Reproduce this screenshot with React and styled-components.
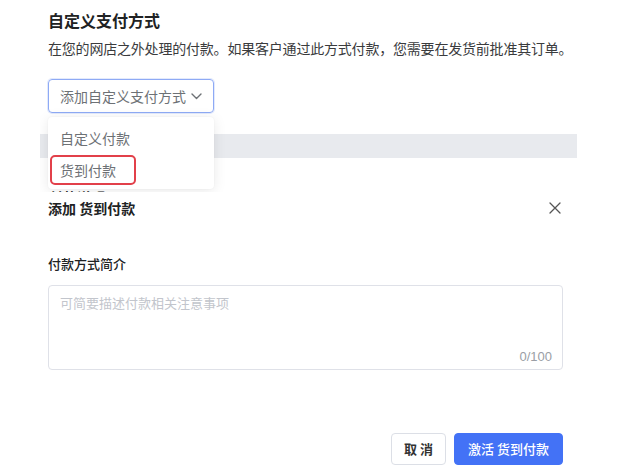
import React from "react";
import styled, { createGlobalStyle } from "styled-components";

const Global = createGlobalStyle`
  html, body { margin: 0; padding: 0; background: #ffffff; }
  body { font-family: "Noto Sans CJK SC", "Noto Sans", "Liberation Sans", sans-serif; color: #202223; }
  * { box-sizing: border-box; }
`;

const Page = styled.div`
  width: 641px;
  height: 472px;
  overflow: hidden;
  background: #fff;
`;

const TopPanel = styled.div`
  position: relative;
  margin-left: 40px;
  width: 537px;
  height: 192px;
  overflow: hidden;
`;

const Title = styled.div`
  padding: 8px 8px 0;
  font-size: 16px;
  line-height: 24px;
  font-weight: 700;
  color: #202223;
`;

const Desc = styled.div`
  margin-top: 5px;
  padding: 0 0 0 8px;
  font-size: 14px;
  line-height: 22px;
  letter-spacing: -0.2px;
  white-space: nowrap;
  color: #3a3b3d;
`;

const DropWrap = styled.div`
  position: relative;
  margin: 20px 0 0 8px;
  width: 166px;
  z-index: 2;
`;

const DropButton = styled.div`
  height: 34px;
  display: flex;
  align-items: center;
  justify-content: space-between;
  padding: 0 11px 0 11px;
  border: 1px solid #8eaaf5;
  border-radius: 4px;
  box-shadow: 0 0 0 1px rgba(142, 170, 245, 0.25);
  font-size: 14px;
  color: #6d7175;
`;

const Menu = styled.div`
  position: absolute;
  top: 38px;
  left: 0;
  width: 166px;
  padding: 5px 0 3px;
  background: #fff;
  border-radius: 4px;
  box-shadow: 0 2px 14px rgba(0, 0, 0, 0.09), 0 0 2px rgba(0, 0, 0, 0.06);
`;

const MenuItem = styled.div`
  position: relative;
  height: 32px;
  display: flex;
  align-items: center;
  padding-left: 12px;
  font-size: 14px;
  color: #6d7175;
`;

const Highlight = styled.span`
  position: absolute;
  left: 2px;
  top: 1px;
  width: 86px;
  height: 30px;
  border: 2px solid #e2404a;
  border-radius: 5px;
`;

const Band = styled.div`
  margin-top: 21px;
  height: 24px;
  background: #e8eaee;
`;

const HiddenHeading = styled.div`
  margin-top: 28px;
  padding-left: 9px;
  font-size: 14px;
  line-height: 22px;
  font-weight: 700;
  color: #202223;
`;

const Modal = styled.div`
  margin-left: 48px;
  width: 515px;
`;

const ModalHeader = styled.div`
  margin-top: 5px;
  display: flex;
  align-items: center;
  justify-content: space-between;
  height: 22px;
`;

const ModalTitle = styled.div`
  font-size: 14px;
  line-height: 22px;
  font-weight: 700;
  color: #202223;
`;

const CloseIcon = styled.svg`
  width: 12px;
  height: 12px;
  margin-right: 2px;
`;

const Label = styled.div`
  margin-top: 35px;
  font-size: 13px;
  line-height: 20px;
  font-weight: 500;
  color: #202223;
`;

const Field = styled.div`
  position: relative;
  margin-top: 11px;
  height: 85px;
  border: 1px solid #dfe1e8;
  border-radius: 4px;
`;

const TextArea = styled.textarea`
  display: block;
  width: 100%;
  height: 100%;
  border: none;
  outline: none;
  resize: none;
  padding: 7px 11px;
  background: transparent;
  font-family: inherit;
  font-size: 13px;
  line-height: 20px;
  color: #202223;
  &::placeholder { color: #c2c5cc; }
`;

const Counter = styled.span`
  position: absolute;
  right: 10px;
  bottom: 2px;
  font-family: "Liberation Sans", "Noto Sans CJK SC", sans-serif;
  font-size: 13px;
  line-height: 20px;
  color: #9a9ea5;
`;

const Footer = styled.div`
  margin-top: 63px;
  display: flex;
  justify-content: flex-end;
  gap: 8px;
`;

const Button = styled.button`
  height: 32px;
  padding: 0 ${(p) => (p.$primary ? "13px" : "12px")};
  border-radius: 4px;
  font-family: inherit;
  font-size: 13px;
  line-height: 20px;
  cursor: pointer;
  border: 1px solid ${(p) => (p.$primary ? "#4372f6" : "#dcdfe6")};
  background: ${(p) => (p.$primary ? "#4372f6" : "#fff")};
  color: ${(p) => (p.$primary ? "#fff" : "#333")};
  font-weight: ${(p) => (p.$primary ? 500 : 600)};
`;

export default function App() {
  return (
    <Page>
      <Global />
      <TopPanel>
        <Title>自定义支付方式</Title>
        <Desc>在您的网店之外处理的付款。如果客户通过此方式付款，您需要在发货前批准其订单。</Desc>
        <DropWrap>
          <DropButton>
            <span>添加自定义支付方式</span>
            <svg width="11" height="7" viewBox="0 0 11 7" fill="none">
              <path d="M1 1l4.5 4.5L10 1" stroke="#6d7175" strokeWidth="1.4" strokeLinecap="round" strokeLinejoin="round" />
            </svg>
          </DropButton>
          <Menu>
            <MenuItem>自定义付款</MenuItem>
            <MenuItem>
              <Highlight />
              货到付款
            </MenuItem>
          </Menu>
        </DropWrap>
        <Band />
        <HiddenHeading>付款说明</HiddenHeading>
      </TopPanel>
      <Modal>
        <ModalHeader>
          <ModalTitle>添加 货到付款</ModalTitle>
          <CloseIcon viewBox="0 0 12 12" fill="none">
            <path d="M1 1l10 10M11 1L1 11" stroke="#555" strokeWidth="1.3" strokeLinecap="round" />
          </CloseIcon>
        </ModalHeader>
        <Label>付款方式简介</Label>
        <Field>
          <TextArea placeholder="可简要描述付款相关注意事项" />
          <Counter>0/100</Counter>
        </Field>
        <Footer>
          <Button>取 消</Button>
          <Button $primary>激活 货到付款</Button>
        </Footer>
      </Modal>
    </Page>
  );
}
